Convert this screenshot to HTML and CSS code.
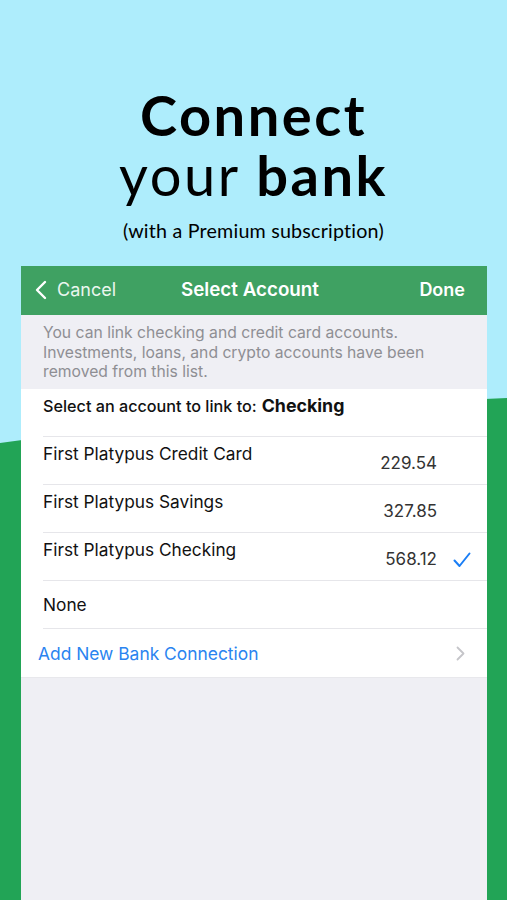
FILE: index.html
```html
<!DOCTYPE html>
<html>
<head>
<meta charset="utf-8">
<link rel="stylesheet" href="styles.css">
</head>
<body>
<div class="page">
  <svg class="hill" width="507" height="900" viewBox="0 0 507 900" aria-hidden="true">
    <path d="M0 443 Q 250 408 507 398 L507 900 L0 900 Z" fill="#22a456"/>
  </svg>
  <header class="hero">
    <h1 class="title"><span class="bold">Connect</span><br>your <span class="bold">bank</span></h1>
    <p class="subtitle">(with a Premium subscription)</p>
  </header>
  <main class="phone">
    <nav class="navbar">
      <div class="nav-left">
        <svg class="back" width="12" height="20" viewBox="0 0 12 20"><path d="M10 2 L2 10 L10 18" fill="none" stroke="#fff" stroke-width="2.4" stroke-linecap="round" stroke-linejoin="round"/></svg>
        <span>Cancel</span>
      </div>
      <div class="nav-title">Select Account</div>
      <div class="nav-right">Done</div>
    </nav>
    <div class="info">You can link checking and credit card accounts. Investments, loans, and crypto accounts have been removed from this list.</div>
    <ul class="list">
      <li class="row header-row">Select an account to link to: <b>Checking</b></li>
      <li class="row account">
        <span class="name">First Platypus Credit Card</span>
        <span class="amount">229.54</span>
        <span class="mark"></span>
      </li>
      <li class="row account">
        <span class="name">First Platypus Savings</span>
        <span class="amount">327.85</span>
        <span class="mark"></span>
      </li>
      <li class="row account">
        <span class="name">First Platypus Checking</span>
        <span class="amount">568.12</span>
        <span class="mark"><svg width="18" height="16" viewBox="0 0 18 16"><path d="M1.5 8.5 L6.5 14 L16.5 1.5" fill="none" stroke="#1a7ef5" stroke-width="2" stroke-linecap="round" stroke-linejoin="round"/></svg></span>
      </li>
      <li class="row none">None</li>
      <li class="row link">
        <span class="link-text">Add New Bank Connection</span>
        <svg class="chev" width="9" height="15" viewBox="0 0 9 15"><path d="M1.5 1.5 L7.5 7.5 L1.5 13.5" fill="none" stroke="#c5c5c9" stroke-width="1.8" stroke-linecap="round" stroke-linejoin="round"/></svg>
      </li>
    </ul>
    <div class="empty"></div>
  </main>
</div>
</body>
</html>
```
FILE: styles.css
```css
* { box-sizing: border-box; }
html, body { margin: 0; padding: 0; }
body { background: #aeedfc; font-family: Inter, "Liberation Sans", sans-serif; }
.page {
  position: relative;
  width: 507px;
  height: 900px;
  overflow: hidden;
  background: #aeedfc;
  display: flex;
  flex-direction: column;
}
.hill { position: absolute; left: 0; top: 0; z-index: 0; }
.hero {
  position: relative;
  z-index: 1;
  text-align: center;
  padding-top: 85px;
  color: #000;
}
.title {
  margin: 0;
  font-family: Lato, sans-serif;
  font-weight: 400;
  font-size: 56px;
  line-height: 60px;
  letter-spacing: 2.5px;
}
.title .bold { font-weight: 700; }
.subtitle {
  margin: 14px 0 0;
  font-family: Lato, sans-serif;
  font-size: 19.7px;
  line-height: 24px;
  letter-spacing: 0.2px;
}
.phone {
  position: relative;
  z-index: 1;
  margin: 23px 20px 0 21px;
  flex: 1;
  display: flex;
  flex-direction: column;
  background: #efeff4;
}
.navbar {
  height: 49px;
  background: #3fa162;
  color: #fff;
  display: flex;
  align-items: center;
  justify-content: space-between;
  padding: 0 22px 3px 14px;
  font-size: 18px;
}
.nav-left { display: flex; align-items: center; gap: 10px; color: #eaf6ee; width: 110px; }
.nav-left .back { margin-top: 1px; }
.nav-title { font-weight: 600; font-size: 18.8px; }
.nav-right { font-weight: 600; width: 110px; text-align: right; }
.info {
  padding: 8px 22px 8px 22px;
  color: #8e8e93;
  font-size: 15.7px;
  line-height: 19.5px;
  height: 74px;
}
.list {
  list-style: none;
  margin: 0;
  padding: 0;
  background: #fff;
}
.row {
  height: 48px;
  margin-left: 22px;
  border-bottom: 1px solid #e6e6ea;
  display: flex;
  align-items: center;
  font-size: 17.3px;
  color: #111;
}
.header-row {
  font-size: 16.2px;
  font-weight: 500;
  align-items: flex-start;
  padding-top: 7px;
}
.header-row b { font-weight: 700; font-size: 17.8px; margin-left: 5px; margin-top: -1px; }
.account { align-items: flex-start; padding-top: 6px; }
.account .name { flex: 1; }
.account .amount { margin-top: 10px; color: #333; width: 60px; text-align: right; font-size: 17px; }
.account .mark { width: 50px; display: flex; justify-content: center; margin-top: 13px; padding-left: 0; }
.link {
  margin-left: 0;
  padding-left: 17px;
  padding-right: 22px;
  border-bottom: none;
  justify-content: space-between;
  font-size: 17.4px;
  color: #2a84f0;
}
.empty { flex: 1; border-top: 1px solid #e8e8ec; }
```
